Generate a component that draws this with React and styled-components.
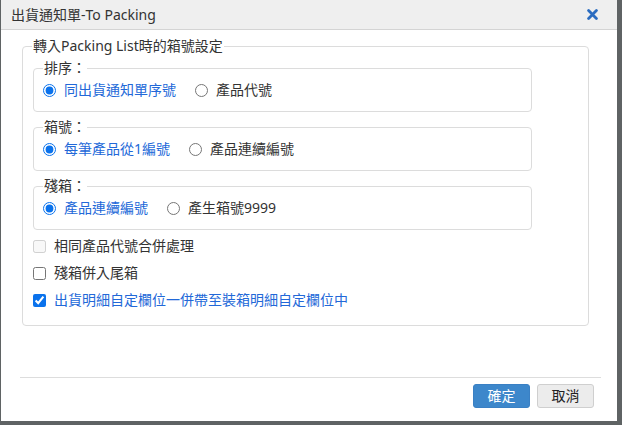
import React, { useState } from "react";
import styled, { createGlobalStyle } from "styled-components";

const Global = createGlobalStyle`
  html, body { margin: 0; padding: 0; }
  body {
    background: #5f6364;
    font-family: "Noto Sans", "Noto Sans CJK TC", sans-serif;
    color: #333;
    width: 622px;
    height: 425px;
    overflow: hidden;
  }
`;

const Dialog = styled.div`
  margin: 0 0 0 1px;
  width: 616px;
  height: 421px;
  background: #fff;
  display: flex;
  flex-direction: column;
  box-sizing: border-box;
`;

const TitleBar = styled.div`
  height: 29px;
  flex: none;
  background: #efefef;
  border-bottom: 1px solid #d4d4d4;
  display: flex;
  align-items: center;
  justify-content: space-between;
  padding: 0 19px 0 10px;
`;

const Title = styled.div`
  font-size: 14px;
  line-height: 20px;
  color: #333;
`;

const CloseButton = styled.button`
  border: 0;
  background: transparent;
  padding: 0;
  width: 11px;
  height: 11px;
  display: flex;
  cursor: pointer;
`;

const Body = styled.div`
  flex: 1;
  padding: 6px 0 0 21px;
`;

const Group = styled.fieldset`
  margin: ${(p) => (p.$outer ? "0" : "2px 0 0 0")};
  width: ${(p) => (p.$outer ? "567px" : "499px")};
  box-sizing: border-box;
  border: 1px solid #dcdcdc;
  border-radius: 4px;
  padding: ${(p) => (p.$outer ? "0 10px 15px 10px" : "0 9px 11px 9px")};
  & + & {
    margin-top: 5px;
  }
`;

const Legend = styled.legend`
  padding: 0 1px;
  font-size: 14px;
  line-height: 20px;
  color: #333;
  margin-left: ${(p) => (p.$outer ? "-1px" : "0")};
`;

const RadioRow = styled.div`
  display: flex;
  align-items: center;
  height: 20px;
  margin-top: 2px;
`;

const Option = styled.label`
  display: flex;
  align-items: center;
  font-size: 14px;
  line-height: 20px;
  color: ${(p) => (p.$on ? "#2268d8" : "#333")};
  & + & {
    margin-left: 19px;
  }
  cursor: pointer;
`;

const Radio = styled.input.attrs({ type: "radio" })`
  margin: 0 8px 0 0;
  width: 13px;
  height: 13px;
  accent-color: #0a72ec;
`;

const CheckList = styled.div`
  display: flex;
  flex-direction: column;
  gap: 7px;
  margin-top: 6px;
`;

const CheckRow = styled.label`
  display: flex;
  align-items: center;
  height: 20px;
  font-size: 14px;
  line-height: 20px;
  color: ${(p) => (p.$on ? "#2268d8" : "#333")};
  cursor: pointer;
`;

const Check = styled.input.attrs({ type: "checkbox" })`
  margin: 0 8px 0 0;
  width: 13px;
  height: 13px;
  accent-color: #0a72ec;
`;

const Footer = styled.div`
  flex: none;
  margin: 0 16px 0 19px;
  border-top: 1px solid #dddddd;
  height: 44px;
  box-sizing: border-box;
  padding: 6px 7px 0 0;
  display: flex;
  justify-content: flex-end;
  align-items: flex-start;
  gap: 7px;
`;

const Button = styled.button`
  width: 57px;
  height: 24px;
  box-sizing: border-box;
  border-radius: 3px;
  font-family: "Noto Sans", "Noto Sans CJK TC", sans-serif;
  font-size: 14px;
  line-height: 20px;
  padding: 0;
  cursor: pointer;
  border: 1px solid ${(p) => (p.$primary ? "#3a80c4" : "#cfcfcf")};
  background: ${(p) => (p.$primary ? "#3d87cb" : "#ececec")};
  color: ${(p) => (p.$primary ? "#fff" : "#222")};
`;

function RadioGroup({ legend, name, options, value, onChange }) {
  return (
    <Group>
      <Legend>{legend}</Legend>
      <RadioRow>
        {options.map((o, i) => (
          <Option key={o} $on={value === i}>
            <Radio name={name} checked={value === i} onChange={() => onChange(i)} />
            {o}
          </Option>
        ))}
      </RadioRow>
    </Group>
  );
}

export default function App() {
  const [sort, setSort] = useState(0);
  const [box, setBox] = useState(0);
  const [rest, setRest] = useState(0);
  const [merge, setMerge] = useState(false);
  const [carry, setCarry] = useState(true);

  return (
    <>
      <Global />
      <Dialog>
        <TitleBar>
          <Title>出貨通知單-To Packing</Title>
          <CloseButton aria-label="close">
            <svg width="11" height="11" viewBox="0 0 11 11">
              <path d="M1.6 1.6 L9.4 9.4 M9.4 1.6 L1.6 9.4" stroke="#2b6cc0" strokeWidth="2.8" strokeLinecap="round" />
            </svg>
          </CloseButton>
        </TitleBar>
        <Body>
          <Group $outer>
            <Legend $outer>轉入Packing List時的箱號設定</Legend>
            <RadioGroup
              legend="排序："
              name="sort"
              options={["同出貨通知單序號", "產品代號"]}
              value={sort}
              onChange={setSort}
            />
            <RadioGroup
              legend="箱號："
              name="box"
              options={["每筆產品從1編號", "產品連續編號"]}
              value={box}
              onChange={setBox}
            />
            <RadioGroup
              legend="殘箱："
              name="rest"
              options={["產品連續編號", "產生箱號9999"]}
              value={rest}
              onChange={setRest}
            />
            <CheckList>
              <CheckRow>
                <Check disabled checked={false} readOnly />
                相同產品代號合併處理
              </CheckRow>
              <CheckRow $on={merge}>
                <Check checked={merge} onChange={(e) => setMerge(e.target.checked)} />
                殘箱併入尾箱
              </CheckRow>
              <CheckRow $on={carry}>
                <Check checked={carry} onChange={(e) => setCarry(e.target.checked)} />
                出貨明細自定欄位一併帶至裝箱明細自定欄位中
              </CheckRow>
            </CheckList>
          </Group>
        </Body>
        <Footer>
          <Button $primary>確定</Button>
          <Button>取消</Button>
        </Footer>
      </Dialog>
    </>
  );
}
